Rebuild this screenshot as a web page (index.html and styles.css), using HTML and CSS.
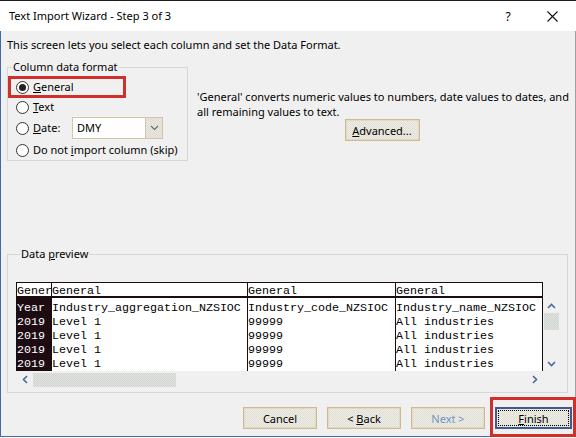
FILE: index.html
```html
<!DOCTYPE html>
<html>
<head>
<meta charset="utf-8">
<title>Text Import Wizard</title>
<link rel="stylesheet" href="styles.css">
</head>
<body>
<div class="window">
  <div class="titlebar">
    <span class="title">Text Import Wizard - Step 3 of 3</span>
    <span class="help">?</span>
    <span class="close"><svg width="11" height="11" viewBox="0 0 11 11"><path d="M0.5 0.5L10.5 10.5M10.5 0.5L0.5 10.5" stroke="#111" stroke-width="1.1" fill="none"/></svg></span>
  </div>
  <div class="body">
    <p class="intro">This screen lets you select each column and set the Data Format.</p>
    <div class="top">
      <fieldset class="group format">
        <legend>Column data format</legend>
        <div class="radio-row r1"><span class="radio checked"></span><span class="lbl"><u>G</u>eneral</span><span class="mark"></span></div>
        <div class="radio-row r2"><span class="radio"></span><span class="lbl"><u>T</u>ext</span></div>
        <div class="radio-row r3"><span class="radio"></span><span class="lbl date-lbl"><u>D</u>ate:</span>
          <span class="combo"><span class="combo-val">DMY</span><span class="combo-btn"><svg width="9" height="6" viewBox="0 0 9 6"><path d="M1 1L4.5 4.5L8 1" stroke="#707070" stroke-width="1.2" fill="none"/></svg></span></span>
        </div>
        <div class="radio-row r4"><span class="radio"></span><span class="lbl">Do not <u>i</u>mport column (skip)</span></div>
      </fieldset>
      <div class="desc">
        <p>'General' converts numeric values to numbers, date values to dates, and<br>all remaining values to text.</p>
        <button class="btn adv"><span><u>A</u>dvanced...</span></button>
      </div>
    </div>
    <fieldset class="group preview">
      <legend>Data <u>p</u>review</legend>
      <div class="pv-row">
        <div class="tbl">
          <div class="thead">
            <div class="cell">Gener</div>
            <div class="cell sep">General</div>
            <div class="cell sep">General</div>
            <div class="cell sep">General</div>
          </div>
          <div class="tbody">
            <div class="cell col1">Year
2019
2019
2019
2019</div>
            <div class="cell sep">Industry_aggregation_NZSIOC
Level 1
Level 1
Level 1
Level 1</div>
            <div class="cell sep">Industry_code_NZSIOC
99999
99999
99999
99999</div>
            <div class="cell sep">Industry_name_NZSIOC
All industries
All industries
All industries
All industries</div>
          </div>
        </div>
        <div class="vscroll">
          <span class="arrow"><svg width="9" height="6" viewBox="0 0 9 6"><path d="M1 5L4.5 1.5L8 5" stroke="#4a6a9c" stroke-width="1.6" fill="none"/></svg></span>
          <span class="vthumb"></span>
          <span class="vspace"></span>
          <span class="arrow"><svg width="9" height="6" viewBox="0 0 9 6"><path d="M1 1L4.5 4.5L8 1" stroke="#4a6a9c" stroke-width="1.6" fill="none"/></svg></span>
        </div>
      </div>
      <div class="hscroll">
        <span class="harrow"><svg width="6" height="9" viewBox="0 0 6 9"><path d="M5 1L1.5 4.5L5 8" stroke="#4a6a9c" stroke-width="1.6" fill="none"/></svg></span>
        <span class="hthumb"></span>
        <span class="hspace"></span>
        <span class="harrow"><svg width="6" height="9" viewBox="0 0 6 9"><path d="M1 1L4.5 4.5L1 8" stroke="#4a6a9c" stroke-width="1.6" fill="none"/></svg></span>
      </div>
    </fieldset>
    <div class="buttons">
      <button class="btn"><span>Cancel</span></button>
      <button class="btn"><span>&lt; <u>B</u>ack</span></button>
      <button class="btn disabled"><span>Next &gt;</span></button>
      <span class="finish-wrap"><button class="btn finish"><span><u>F</u>inish</span></button><span class="mark2"></span></span>
    </div>
  </div>
</div>
</body>
</html>
```
FILE: styles.css
```css
html, body {
  margin: 0;
  padding: 0;
  background: #ffffff;
}
body {
  font-family: "Segoe UI", "Noto Sans", sans-serif;
  font-size: 11px;
  color: #000;
}
.window {
  width: 576px;
  height: 437px;
  display: flex;
  flex-direction: column;
}
.titlebar {
  height: 30px;
  flex: none;
  border-top: 1px solid #1e1e1e;
  background: #fff;
  display: flex;
  align-items: center;
  padding-left: 9px;
}
.title {
  flex: 1;
  line-height: 16px;
  font-size: 11px;
}
.help {
  width: 14px;
  text-align: center;
  font-size: 12px;
  margin-right: 32px;
}
.close {
  display: flex;
  margin-right: 18px;
}
.body {
  flex: 1;
  background: #f0f0f0;
  border-left: 1px solid #4468a8;
  border-right: 1px solid #a0a0a0;
  border-bottom: 1px solid #4468a8;
  padding: 0 3px 0 6px;
  display: flex;
  flex-direction: column;
}
.intro {
  margin: 6px 0 0;
  line-height: 16px;
}
.top {
  display: flex;
  margin-top: 6px;
}
.group {
  box-sizing: border-box;
  margin: 0;
  border: 1px solid #d6d6d6;
  min-width: 0;
}
.group legend {
  margin-left: 4px;
  padding: 0 1px;
  line-height: 16px;
}
.format {
  width: 181px;
  padding: 0 0 1px 0;
}
.radio-row {
  display: flex;
  align-items: center;
  height: 18px;
  position: relative;
}
.r1 { margin-top: 3px; }
.r2 { margin-top: 2px; }
.r3 { margin-top: 1px; height: 22px; }
.r4 { margin-top: 2px; }
.radio {
  box-sizing: border-box;
  width: 13px;
  height: 13px;
  margin-left: 8px;
  border: 1px solid #333;
  border-radius: 50%;
  background: #fff;
  display: flex;
  align-items: center;
  justify-content: center;
  flex: none;
}
.radio.checked::before {
  content: "";
  width: 7px;
  height: 7px;
  border-radius: 50%;
  background: #222;
}
.lbl {
  margin-left: 4px;
  line-height: 16px;
  white-space: nowrap;
}
.date-lbl {
  width: 39px;
  flex: none;
}
.mark {
  position: absolute;
  left: 0;
  top: -2px;
  width: 118px;
  height: 22px;
  box-sizing: border-box;
  border: 3px solid #d0302c;
}
.combo {
  box-sizing: border-box;
  width: 91px;
  height: 22px;
  border: 1px solid #d3c5a5;
  background: #fff;
  display: flex;
  align-items: stretch;
  flex: none;
}
.combo-val {
  flex: 1;
  padding-left: 4px;
  line-height: 20px;
}
.combo-btn {
  width: 16px;
  border-left: 1px solid #d3c5a5;
  background: repeating-conic-gradient(#ecebe5 0 25%, #dcd8cb 0 50%) 0 0 / 2px 2px;
  display: flex;
  align-items: center;
  justify-content: center;
}
.desc {
  margin-left: 9px;
  margin-top: 30px;
  width: 370px;
  display: flex;
  flex-direction: column;
  align-items: center;
}
.desc p {
  margin: 0;
  line-height: 15px;
  align-self: flex-start;
  white-space: nowrap;
}
.btn {
  box-sizing: border-box;
  width: 74px;
  height: 22px;
  border: 1px solid #cdb993;
  box-shadow: inset 0 0 0 1px #e3d9c3;
  background: repeating-conic-gradient(#efeee9 0 25%, #dfdcd1 0 50%) 0 0 / 2px 2px;
  font: inherit;
  color: #000;
  padding: 0;
  display: flex;
  align-items: center;
  justify-content: center;
}
.adv {
  width: 75px;
}
.preview {
  width: 561px;
  margin-top: 85px;
  padding: 20px 7px 4px 8px;
}
.pv-row {
  display: flex;
}
.tbl {
  box-sizing: border-box;
  width: 527px;
  border: 1px solid #1a0d12;
  border-bottom: none;
  font-family: "Liberation Mono", "Courier New", monospace;
  font-size: 11.67px;
  background: #fff;
}
.thead, .tbody {
  display: grid;
  grid-template-columns: 34px 196px 148px 147px;
}
.thead {
  height: 13px;
  border-bottom: 2px solid #1a0d12;
}
.thead .cell {
  box-sizing: border-box;
  height: 13px;
  padding-top: 4px;
  line-height: 9px;
  overflow-x: clip;
  overflow-y: visible;
  white-space: nowrap;
}
.tbody {
  height: 73px;
  line-height: 14px;
}
.tbody .cell {
  padding-top: 3px;
  white-space: pre;
  overflow: hidden;
}
.cell.sep {
  border-left: 1px solid #1a0d12;
}
.col1 {
  background: #1c0c12;
  color: #fff;
}
.vscroll {
  width: 17px;
  margin-top: 16px;
  height: 73px;
  display: flex;
  flex-direction: column;
  align-items: center;
}
.arrow {
  height: 15px;
  display: flex;
  align-items: center;
  justify-content: center;
  flex: none;
}
.vthumb {
  width: 15px;
  height: 17px;
  flex: none;
  background: repeating-conic-gradient(#e8e4d8 0 25%, #c9d3da 0 50%) 0 0 / 2px 2px;
}
.vspace {
  flex: 1;
}
.hscroll {
  width: 527px;
  height: 17px;
  display: flex;
  align-items: center;
}
.harrow {
  width: 17px;
  height: 17px;
  display: flex;
  align-items: center;
  justify-content: center;
  flex: none;
}
.hthumb {
  width: 143px;
  height: 14px;
  background: repeating-conic-gradient(#e8e4d8 0 25%, #cad3d9 0 50%) 0 0 / 2px 2px;
}
.hspace {
  flex: 1;
}
.buttons {
  margin-top: 14px;
  display: flex;
  justify-content: flex-end;
  gap: 10px;
}
.btn span {
  white-space: pre;
}
.btn.disabled {
  color: #7295c2;
}
.finish-wrap {
  position: relative;
  display: flex;
}
.btn.finish {
  width: 77px;
  border: 2px solid #3d5b8f;
  box-shadow: none;
  outline: 1px dotted #000;
  outline-offset: -4px;
}
.mark2 {
  position: absolute;
  left: -5px;
  top: -10px;
  width: 86px;
  height: 40px;
  box-sizing: border-box;
  border: 3px solid #d0302c;
}
```
